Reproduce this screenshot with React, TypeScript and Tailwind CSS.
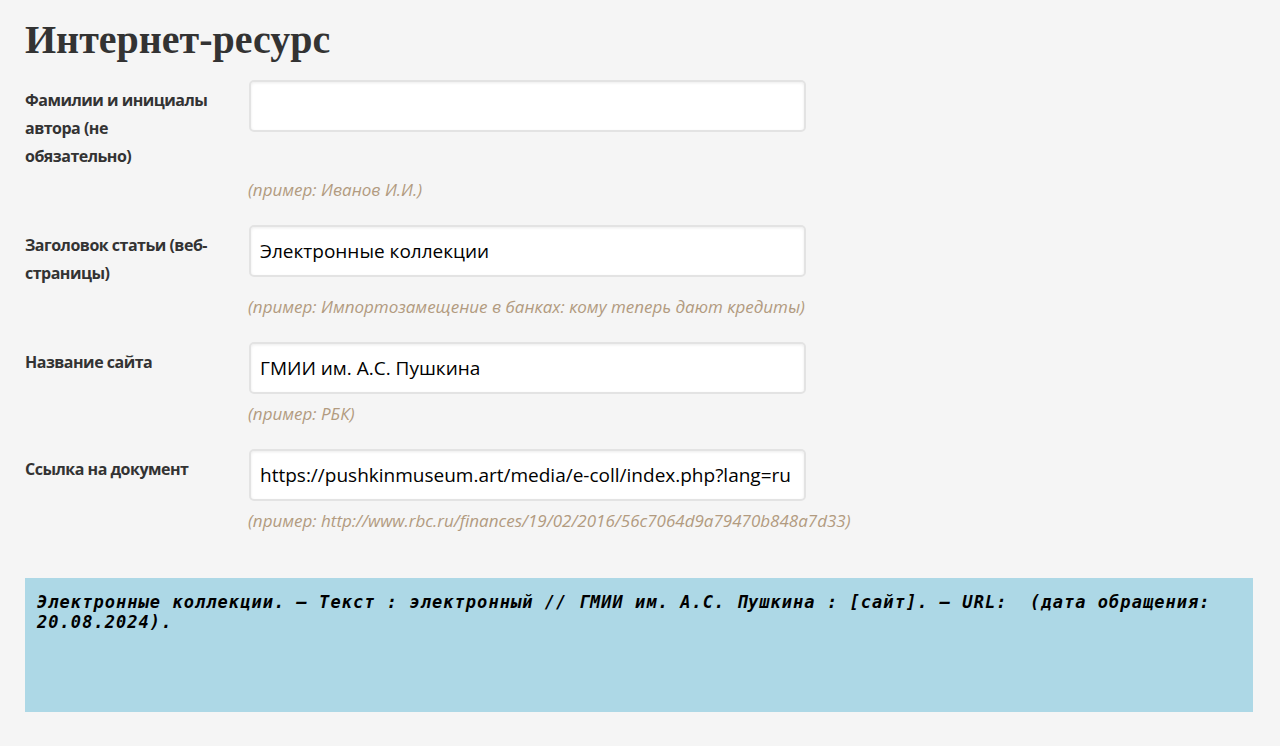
import React from "react";

const rows = [
  { label: "Фамилии и инициалы автора (не обязательно)", value: "", hint: "(пример: Иванов И.И.)" },
  { label: "Заголовок статьи (веб-страницы)", value: "Электронные коллекции", hint: "(пример: Импортозамещение в банках: кому теперь дают кредиты)" },
  { label: "Название сайта", value: "ГМИИ им. А.С. Пушкина", hint: "(пример: РБК)" },
  { label: "Ссылка на документ", value: "https://pushkinmuseum.art/media/e-coll/index.php?lang=ru", hint: "(пример: http://www.rbc.ru/finances/19/02/2016/56c7064d9a79470b848a7d33)" },
];

export default function App() {
  return (
    <div className="min-h-[746px] w-full bg-[#f5f5f5] pl-[25px] pr-[27px] pt-[18px] pb-[34px]">
      <h1 className="text-[40px] leading-[44px] font-bold text-[#333333] [font-family:'Liberation_Serif',serif]">
        Интернет-ресурс
      </h1>
      <div className="mt-[18px] flex flex-col">
        {rows.map((r, i) => (
          <div key={i} className={i === 0 ? "" : "mt-[25px]"}>
            <div className="flex items-start">
              <div className="w-[192px] shrink-0 mt-[6px] text-[16px] leading-[28px] font-bold tracking-[-0.5px] text-[#333333] [font-family:'Open_Sans',sans-serif]">
                {r.label}
              </div>
              <input
                readOnly
                value={r.value}
                className="ml-[32px] w-[557px] h-[52px] rounded-[5px] border-2 border-[#e3e3e3] bg-white px-[9px] text-[19px] text-black shadow-[inset_0_1px_3px_rgba(0,0,0,0.08)] outline-none [font-family:'Open_Sans',sans-serif]"
              />
            </div>
            <div className="mt-[10px] ml-[223px] text-[17px] leading-[20px] italic text-[#b29b80] [font-family:'Open_Sans',sans-serif]">
              {r.hint}
            </div>
          </div>
        ))}
      </div>
      <div className="mt-[47px] h-[134px] w-full bg-[#add8e6] px-[12px] pt-[14px]">
        <p className="text-[17px] leading-[20px] font-bold italic text-black tracking-[1.05px] [font-family:'DejaVu_Sans_Mono',monospace]">
          Электронные коллекции. — Текст : электронный // ГМИИ им. А.С. Пушкина : [сайт]. — URL:&nbsp; (дата обращения: 20.08.2024).
        </p>
      </div>
    </div>
  );
}
